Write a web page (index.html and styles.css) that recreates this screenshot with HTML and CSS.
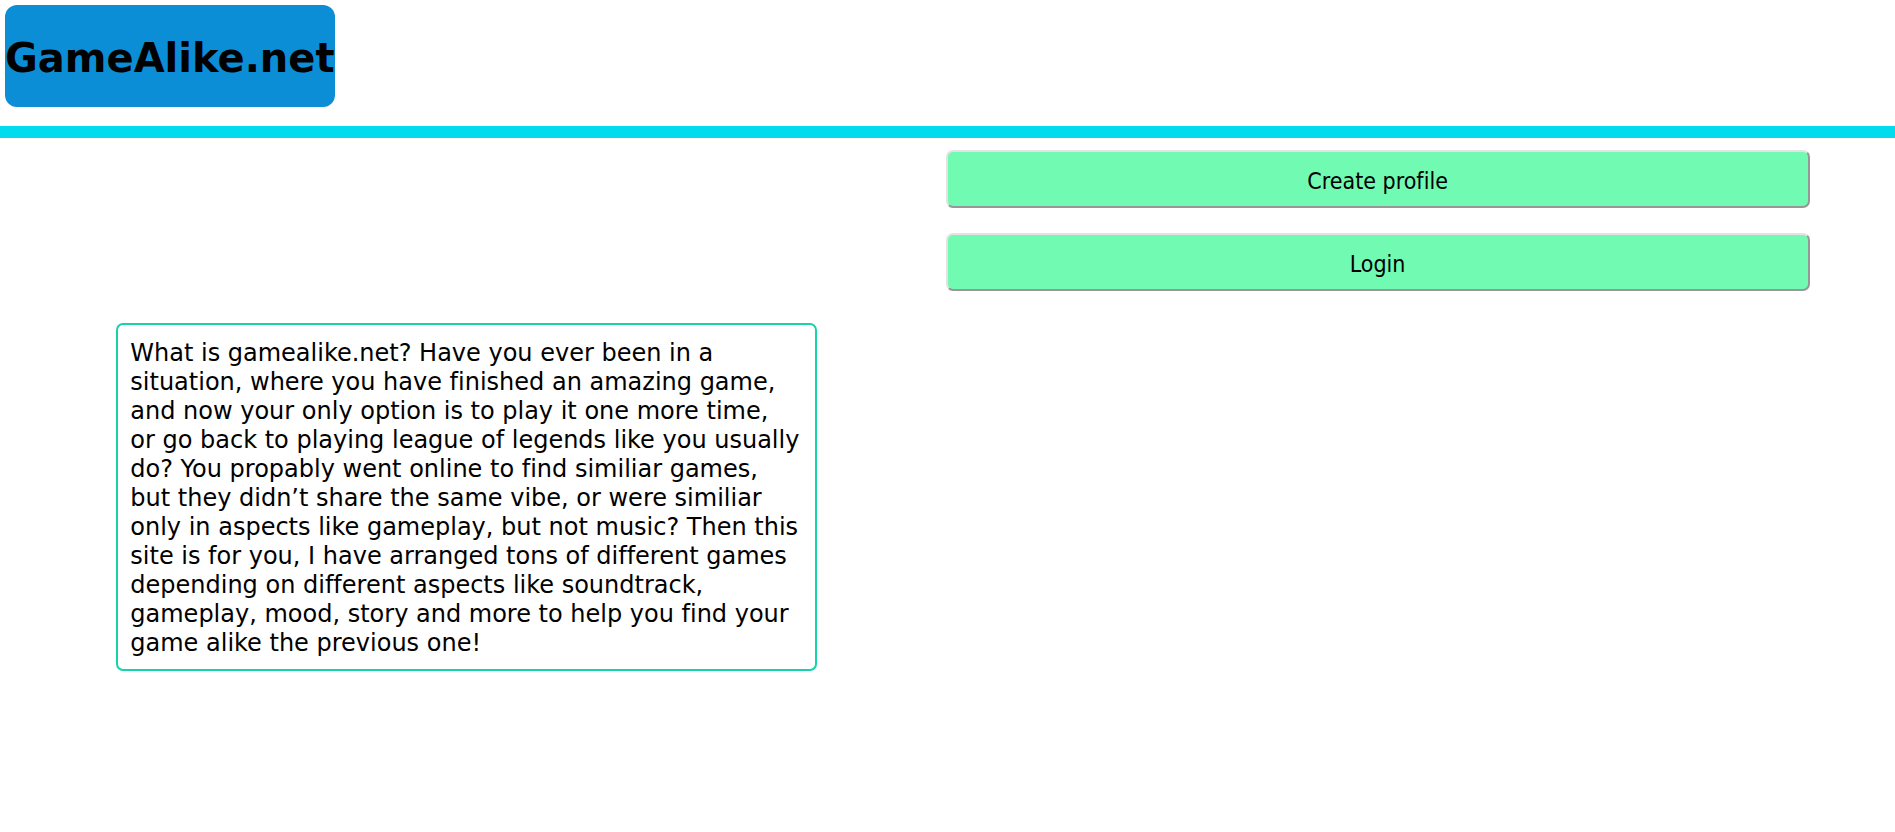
FILE: index.html
```html
<!DOCTYPE html>
<html lang="en">
<head>
<meta charset="utf-8">
<title>GameAlike.net</title>
<link rel="stylesheet" href="styles.css">
</head>
<body>
<header class="header">
  <h1 class="logo">GameAlike.net</h1>
</header>
<main class="main">
  <section class="about">
    <p class="about-text">What is gamealike.net? Have you ever been in a situation, where you have finished an amazing game, and now your only option is to play it one more time,<br> or go back to playing league of legends like you usually do? You propably went online to find similiar games,<br> but they didn’t share the same vibe, or were similiar only in aspects like gameplay, but not music? Then this site is for you, I have arranged tons of different games depending on different aspects like soundtrack, gameplay, mood, story and more to help you find your game alike the previous one!</p>
  </section>
  <nav class="actions">
    <button class="action" type="button">Create profile</button>
    <button class="action" type="button">Login</button>
  </nav>
</main>
</body>
</html>
```

FILE: styles.css
```css
* {
  box-sizing: border-box;
}

body {
  margin: 0;
  background: #fff;
  color: #000;
  font-family: Verdana, "DejaVu Sans", sans-serif;
  font-variant-ligatures: none;
}

.header {
  display: flex;
  padding: 5px 5px 19px;
  border-bottom: 12px solid #00dcee;
}

.logo {
  margin: 0;
  padding: 29px 0 25px;
  border-radius: 12px;
  background: #0c8ed6;
  font-size: 40px;
  line-height: 48px;
}

.main {
  display: grid;
  grid-template-columns: 49.9% 1fr;
}

.about {
  padding: 185px 13.6% 0 12.3%;
}

.about-text {
  margin: 0;
  padding: 14px 12px 11px;
  border: 2px solid #16d3a9;
  border-radius: 7px;
  font-size: 24px;
  line-height: 29px;
}

.actions {
  display: flex;
  flex-direction: column;
  gap: 25px;
  padding: 12px 9% 0 0;
}

.action {
  padding: 14px 12px 10px;
  border: 2px solid;
  border-color: #e3e3e3 #979797 #979797 #e3e3e3;
  border-radius: 7px;
  background: #71fab1;
  color: #000;
  font-family: Tahoma, "DejaVu Sans Condensed", "Open Sans", sans-serif;
  font-size: 23px;
  font-variant-ligatures: none;
  line-height: 30px;
}
```
